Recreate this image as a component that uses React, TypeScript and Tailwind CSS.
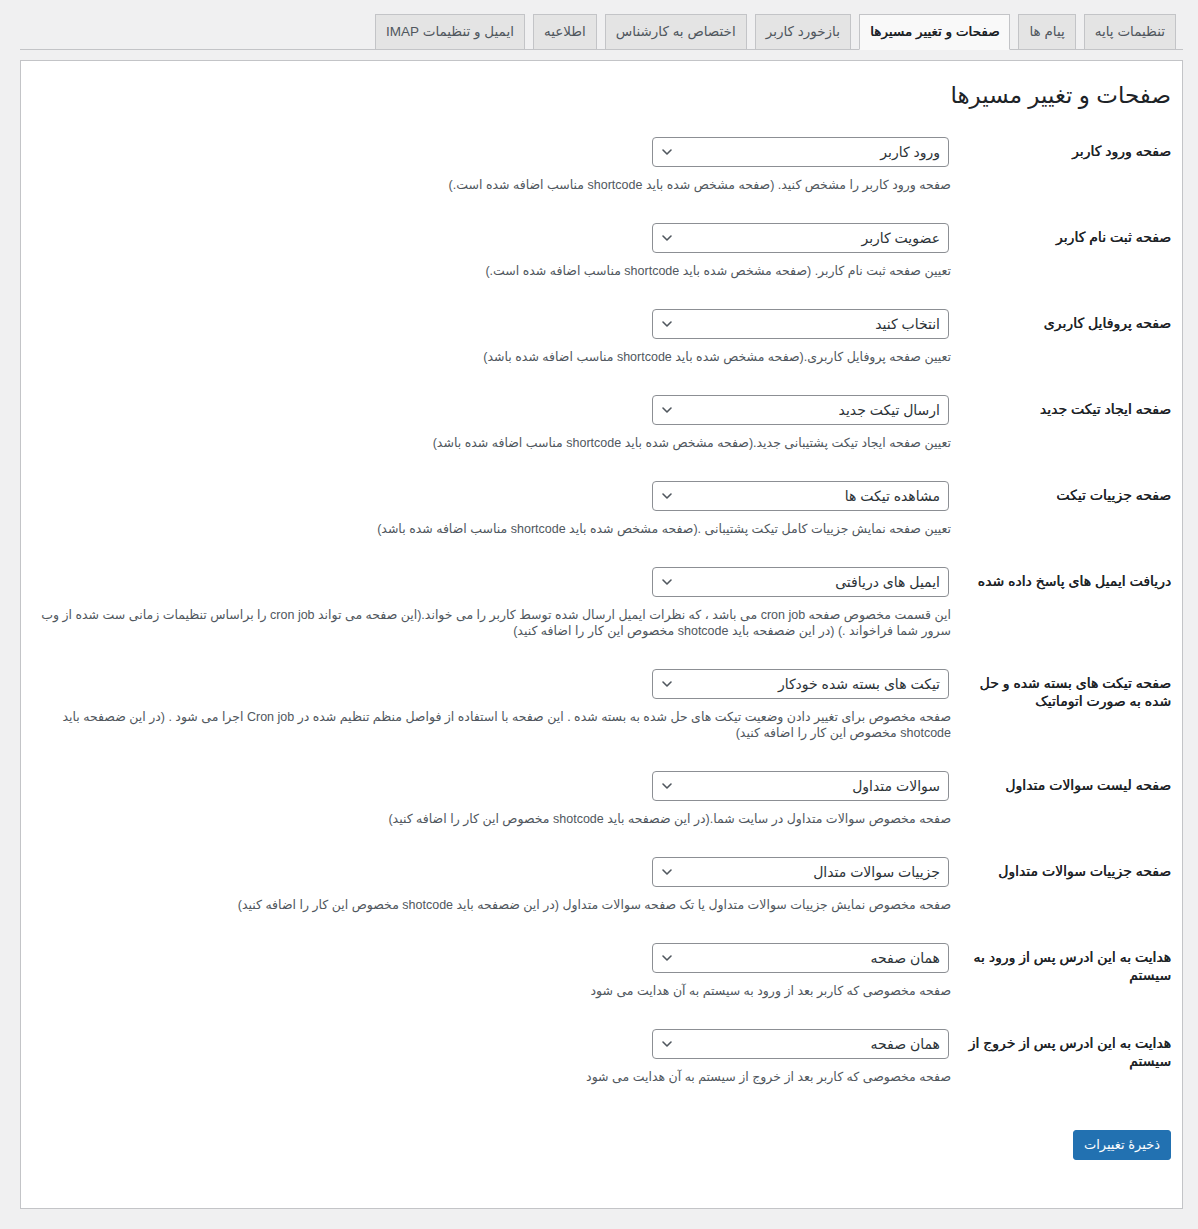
import React from "react";

const tabs = [
  { label: "تنظیمات پایه", active: false },
  { label: "پیام ها", active: false },
  { label: "صفحات و تغییر مسیرها", active: true },
  { label: "بازخورد کاربر", active: false },
  { label: "اختصاص به کارشناس", active: false },
  { label: "اطلاعیه", active: false },
  { label: "ایمیل و تنظیمات IMAP", active: false },
];

const rows = [
  {
    label: "صفحه ورود کاربر",
    value: "ورود کاربر",
    desc: "صفحه ورود کاربر را مشخص کنید. (صفحه مشخص شده باید shortcode مناسب اضافه شده است.)",
  },
  {
    label: "صفحه ثبت نام کاربر",
    value: "عضویت کاربر",
    desc: "تعیین صفحه ثبت نام کاربر. (صفحه مشخص شده باید shortcode مناسب اضافه شده است.)",
  },
  {
    label: "صفحه پروفایل کاربری",
    value: "انتخاب کنید",
    desc: "تعیین صفحه پروفایل کاربری.(صفحه مشخص شده باید shortcode مناسب اضافه شده باشد)",
  },
  {
    label: "صفحه ایجاد تیکت جدید",
    value: "ارسال تیکت جدید",
    desc: "تعیین صفحه ایجاد تیکت پشتیبانی جدید.(صفحه مشخص شده باید shortcode مناسب اضافه شده باشد)",
  },
  {
    label: "صفحه جزییات تیکت",
    value: "مشاهده تیکت ها",
    desc: "تعیین صفحه نمایش جزییات کامل تیکت پشتیبانی .(صفحه مشخص شده باید shortcode مناسب اضافه شده باشد)",
  },
  {
    label: "دریافت ایمیل های پاسخ داده شده",
    value: "ایمیل های دریافتی",
    desc: "این قسمت مخصوص صفحه cron job می باشد ، که نظرات ایمیل ارسال شده توسط کاربر را می خواند.(این صفحه می تواند cron job را براساس تنظیمات زمانی ست شده از وب سرور شما فراخواند .) (در این ضصفحه باید shotcode مخصوص این کار را اضافه کنید)",
  },
  {
    label: "صفحه تیکت های بسته شده و حل شده به صورت اتوماتیک",
    value: "تیکت های بسته شده خودکار",
    desc: "صفحه مخصوص برای تغییر دادن وضعیت تیکت های حل شده به بسته شده . این صفحه با استفاده از فواصل منظم تنظیم شده در Cron job اجرا می شود . (در این ضصفحه باید shotcode مخصوص این کار را اضافه کنید)",
  },
  {
    label: "صفحه لیست سوالات متداول",
    value: "سوالات متداول",
    desc: "صفحه مخصوص سوالات متداول در سایت شما.(در این ضصفحه باید shotcode مخصوص این کار را اضافه کنید)",
  },
  {
    label: "صفحه جزییات سوالات متداول",
    value: "جزییات سوالات متدال",
    desc: "صفحه مخصوص نمایش جزییات سوالات متداول یا تک صفحه سوالات متداول (در این ضصفحه باید shotcode مخصوص این کار را اضافه کنید)",
  },
  {
    label: "هدایت به این ادرس پس از ورود به سیستم",
    value: "همان صفحه",
    desc: "صفحه مخصوصی که کاربر بعد از ورود به سیستم به آن هدایت می شود",
  },
  {
    label: "هدایت به این ادرس پس از خروج از سیستم",
    value: "همان صفحه",
    desc: "صفحه مخصوصی که کاربر بعد از خروج از سیستم به آن هدایت می شود",
  },
];

function Chevron() {
  return (
    <svg width="12" height="8" viewBox="0 0 12 8" className="shrink-0">
      <polyline
        points="2,2 6,6 10,2"
        fill="none"
        stroke="#50575e"
        strokeWidth="1.6"
        strokeLinecap="round"
        strokeLinejoin="round"
      />
    </svg>
  );
}

function FakeSelect({ value }: { value: string }) {
  return (
    <div className="mr-[2px] flex h-[30px] w-[297px] items-center justify-between rounded-[4px] border border-[#8c8f94] bg-white pr-[8px] pl-[8px] text-[14px] text-[#2c3338]">
      <span className="leading-[28px]">{value}</span>
      <Chevron />
    </div>
  );
}

export default function App() {
  return (
    <div
      dir="rtl"
      className="min-h-[1229px] bg-[#f0f0f1] pl-[20px] pr-[15px] pt-[14px] font-['Liberation_Sans','DejaVu_Sans',sans-serif]"
    >
      <div className="flex items-end gap-[8px] border-b border-[#c3c4c7] pr-[7px]">
        {tabs.map((t) => (
          <div
            key={t.label}
            className={
              t.active
                ? "-mb-px flex h-[36px] items-center border border-b-[#f9f9f9] border-[#c3c4c7] bg-[#f9f9f9] px-[10px] text-[13.5px] text-[#1d2327] [text-shadow:0.45px_0_0_#1d2327]"
                : "flex h-[35px] items-center border border-b-0 border-[#c3c4c7] bg-[#e4e4e4] px-[10px] text-[13.5px] text-[#50575e]"
            }
          >
            {t.label}
          </div>
        ))}
      </div>

      <div className="mt-[10px] border border-[#c3c4c7] bg-white pb-[48px] pl-[6px] pr-[11px] pt-[19px]">
        <h2 className="mb-[12px] text-[23px] leading-[30px] font-normal text-[#1d2327]">
          صفحات و تغییر مسیرها
        </h2>

        <div>
          {rows.map((r) => (
            <div key={r.label} className="flex">
              <div className="w-[210px] shrink-0 pl-[3px] pt-[20px] text-[14px] leading-[18px] text-[#1d2327] [text-shadow:0.45px_0_0_#1d2327]">
                {r.label}
              </div>
              <div className="min-w-0 flex-1 px-[10px] py-[15px]">
                <FakeSelect value={r.value} />
                <p className="mt-[10px] text-[12.5px] leading-[16px] text-[#50575e]">
                  {r.desc}
                </p>
              </div>
            </div>
          ))}
        </div>

        <div className="mt-[30px]">
          <button className="h-[30px] rounded-[3px] border border-[#2271b1] bg-[#2271b1] px-[10px] text-[13px] text-white">
            ذخیرهٔ تغییرات
          </button>
        </div>
      </div>
    </div>
  );
}
